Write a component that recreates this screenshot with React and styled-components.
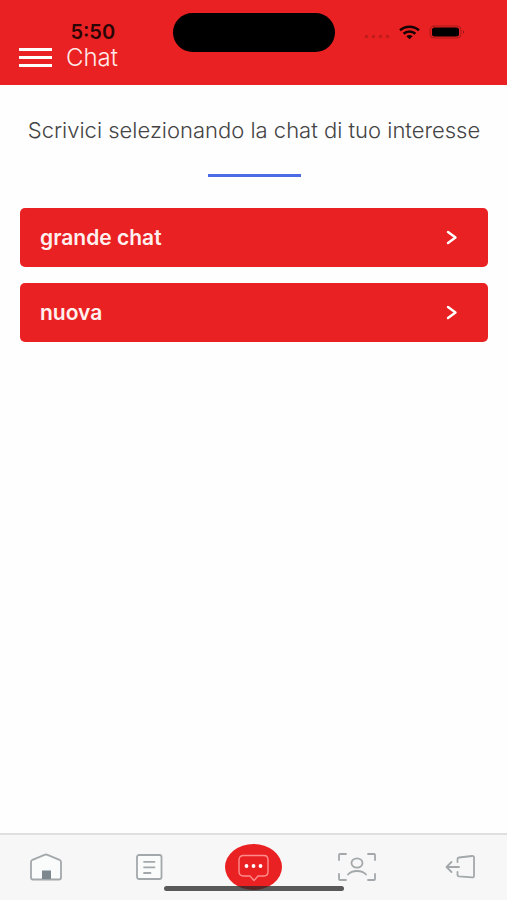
import React from "react";
import styled, { createGlobalStyle } from "styled-components";

const GlobalStyle = createGlobalStyle`
  * {
    box-sizing: border-box;
  }
  body {
    margin: 0;
    background-color: #fefefe;
    font-family: Inter, "Liberation Sans", sans-serif;
  }
`;
const Screen = styled.div`
  display: flex;
  flex-direction: column;
  min-height: 100vh;
`;
const StatusBar = styled.div`
  position: absolute;
  top: 0;
  left: 0;
  right: 0;
  display: grid;
  grid-template-columns: 1fr 162px 1fr;
  align-items: center;
  height: 64px;
  pointer-events: none;
`;
const Time = styled.span`
  padding-left: 13px;
  text-align: center;
  color: #2a0505;
  font-size: 20px;
  font-weight: 600;
`;
const Island = styled.div`
  height: 39px;
  border-radius: 20px;
  background-color: #000;
`;
const StatusIcons = styled.div`
  display: flex;
  justify-content: flex-end;
  align-items: center;
  gap: 9px;
  padding-right: 42px;
`;
const Header = styled.header`
  display: flex;
  align-items: flex-end;
  gap: 14px;
  height: 85px;
  padding: 0 19px 13px;
  background-color: #ea2122;
`;
const MenuButton = styled.button`
  display: flex;
  flex-direction: column;
  justify-content: space-between;
  width: 33px;
  height: 19px;
  margin-bottom: 5px;
  padding: 0;
  border: none;
  background-color: transparent;
`;
const MenuLine = styled.span`
  height: 3px;
  background-color: #fff;
`;
const Title = styled.h1`
  margin: 0;
  color: #ffe9e9;
  font-size: 24px;
  line-height: 28px;
  font-weight: 300;
`;
const Main = styled.main`
  display: flex;
  flex: 1;
  flex-direction: column;
  align-items: center;
  padding: 31px 19px 0 20px;
`;
const Intro = styled.p`
  margin: 0;
  color: #444;
  font-size: 22px;
  line-height: 28px;
  font-weight: 300;
  text-align: center;
`;
const Divider = styled.hr`
  width: 93px;
  height: 3px;
  margin: 30px 0 31px;
  border: none;
  background-color: #4c6ae6;
`;
const ChatList = styled.div`
  display: flex;
  flex-direction: column;
  gap: 16px;
  width: 100%;
`;
const ChatButton = styled.button`
  display: flex;
  justify-content: space-between;
  align-items: center;
  width: 100%;
  height: 59px;
  padding: 0 30px 0 20px;
  border: none;
  border-radius: 5px;
  background-color: #ea2122;
  color: #fff0f0;
  font-family: inherit;
  font-size: 21px;
  font-weight: 600;
`;
const TabBar = styled.nav`
  display: flex;
  justify-content: space-between;
  align-items: center;
  height: 67px;
  padding: 0 18px 1px 17px;
  border-top: 2px solid #dedfdf;
  background-color: #f7f7f7;
`;
const Tab = styled.button`
  display: flex;
  justify-content: center;
  align-items: center;
  width: 57px;
  height: 46px;
  padding: 0;
  border: none;
  border-radius: 50%;
  background-color: ${props => (props.$active ? "#ea2122" : "transparent")};
`;
const Icon = styled.svg`
  display: block;
  fill: none;
  stroke: ${props => props.$color || "#a3a8aa"};
  stroke-width: ${props => props.$weight || 1.8};
  stroke-linecap: round;
  stroke-linejoin: round;
`;
const HomeIndicator = styled.div`
  position: fixed;
  bottom: 9px;
  left: 50%;
  width: 180px;
  height: 5px;
  border-radius: 3px;
  background-color: rgba(40, 40, 40, 0.76);
  transform: translateX(-50%);
  pointer-events: none;
`;

const chats = ["grande chat", "nuova"];

const HomeIcon = () => (
  <Icon width="34" height="28" viewBox="0 0 34 28">
    <path
      fill="#fafcfc"
      d="M4 26.5Q2 26.5 2 24.5V9Q2 7.5 3.5 6.8L15.5 1.8Q17 1.2 18.5 1.8L30.5 6.8Q32 7.5 32 9V24.5Q32 26.5 30 26.5Z"
    />
    <path fill="#7d888e" stroke="none" d="M13 17.5h9v8.5h-9z" />
  </Icon>
);
const NewsIcon = () => (
  <Icon width="28" height="28" viewBox="0 0 28 28">
    <rect x="2" y="2" width="24.5" height="24" rx="2" fill="#fafcfc" />
    <path d="M9 8.8h10.500M9 14.300h10.500M9 20h6.500" />
  </Icon>
);
const ChatIcon = () => (
  <Icon width="32" height="30" viewBox="0 0 32 30" $color="#ff8c8c" $weight="1.4">
    <path d="M6 3.5H27Q31 3.5 31 8V19.5Q31 24 27 24H21L17 28.500L13 24H6.500Q2 24 2 19.500V8Q2 3.500 6.500 3.500Z" />
    <g fill="#fff" stroke="none">
      <circle cx="9.500" cy="14" r="1.900" />
      <circle cx="16.500" cy="14" r="1.900" />
      <circle cx="23.500" cy="14" r="1.900" />
    </g>
  </Icon>
);
const ProfileIcon = () => (
  <Icon width="40" height="30" viewBox="0 0 40 30">
    <path d="M2 8V3Q2 2 3 2H9M31 2H37Q38 2 38 3V8M2 22V27Q2 28 3 28H9M31 28H37Q38 28 38 27V22" />
    <ellipse cx="20" cy="11" rx="5.5" ry="4.7" />
    <path d="M11 22.5C15 17.8 25 17.8 29 22.5" />
  </Icon>
);
const LogoutIcon = () => (
  <Icon width="32" height="26" viewBox="0 0 32 26">
    <path d="M12.500 8V5Q12.500 3.700 14 3.500L27 2Q29 1.800 29 3.300V22Q29 23.600 27 23.400L14 22.300Q12.500 22.100 12.500 21V18" />
    <path d="M14 13H2M6.500 8L1.500 13L6.500 18" />
  </Icon>
);
const WifiIcon = () => (
  <Icon width="21" height="15" viewBox="0 0 21 15" $color="#160303" $weight="2.6">
    <g strokeLinecap="butt">
      <path d="M1 5.3C6.5 .5 14.5 .5 20 5.3" />
      <path d="M4.6 8.8C8 5.8 13 5.8 16.4 8.8" />
    </g>
    <path fill="#160303" stroke="none" d="M7.3 11.3Q10.5 8.7 13.7 11.3L10.5 14.3Z" />
  </Icon>
);
const BatteryIcon = () => (
  <Icon width="36" height="14" viewBox="0 0 36 14" $color="#a81a1b" $weight="1">
    <rect x="1" y="1" width="31" height="12" rx="4" />
    <rect x="3" y="2.5" width="27" height="9" rx="2.5" fill="#000" stroke="none" />
    <path fill="#8f1718" stroke="none" d="M34 5Q36 7 34 9Z" />
  </Icon>
);
const SignalIcon = () => (
  <Icon width="26" height="16" viewBox="0 0 26 16">
    <g fill="#bf1c1d" stroke="none">
      <circle cx="2.5" cy="12.5" r="1.7" />
      <circle cx="9.5" cy="12.5" r="1.7" />
      <circle cx="16.5" cy="12.5" r="1.7" />
      <circle cx="23.5" cy="12.5" r="1.7" />
    </g>
  </Icon>
);
const ArrowIcon = () => (
  <Icon width="12" height="16" viewBox="0 0 12 16" $color="#fff" $weight="2.4">
    <path d="M2 2L9.5 7.500L2 13" />
  </Icon>
);

const tabs = [
  { label: "Home", icon: <HomeIcon /> },
  { label: "News", icon: <NewsIcon /> },
  { label: "Chat", icon: <ChatIcon />, active: true },
  { label: "Profilo", icon: <ProfileIcon /> },
  { label: "Esci", icon: <LogoutIcon /> },
];

const App = () => {
  return (
    <Screen>
      <GlobalStyle />
      <Header>
        <MenuButton aria-label="Menu">
          <MenuLine />
          <MenuLine />
          <MenuLine />
        </MenuButton>
        <Title>Chat</Title>
      </Header>
      <StatusBar>
        <Time>5:50</Time>
        <Island />
        <StatusIcons>
          <SignalIcon />
          <WifiIcon />
          <BatteryIcon />
        </StatusIcons>
      </StatusBar>
      <Main>
        <Intro>Scrivici selezionando la chat di tuo interesse</Intro>
        <Divider />
        <ChatList>
          {chats.map(chat => (
            <ChatButton key={chat}>
              {chat}
              <ArrowIcon />
            </ChatButton>
          ))}
        </ChatList>
      </Main>
      <TabBar>
        {tabs.map(tab => (
          <Tab key={tab.label} aria-label={tab.label} $active={tab.active}>
            {tab.icon}
          </Tab>
        ))}
      </TabBar>
      <HomeIndicator />
    </Screen>
  );
};
export default App;
